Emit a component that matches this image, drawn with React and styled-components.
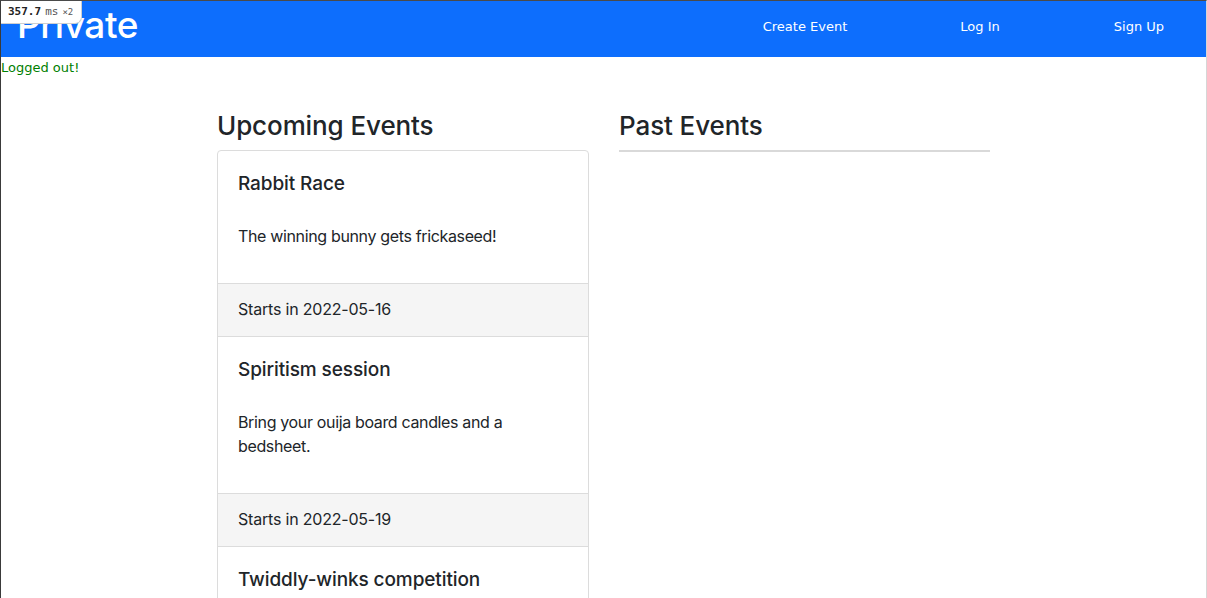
import React from "react";
import styled, { createGlobalStyle } from "styled-components";

const Global = createGlobalStyle`
  html, body { margin: 0; padding: 0; background: #fff; }
  body {
    font-family: Inter, "Noto Sans", "Liberation Sans", sans-serif;
    color: #212529;
    min-height: 598px;
    box-sizing: border-box;
    border-top: 1px solid #4a4a4a;
    border-left: 1px solid #3a3a3a;
    border-right: 1px solid #d6d6d6;
    overflow: hidden;
  }
  * { box-sizing: border-box; }
`;

const Page = styled.div`
  position: relative;
  min-height: 597px;
`;

const Badge = styled.div`
  position: absolute;
  top: 0;
  left: 0;
  background: #fff;
  padding: 4px 8px 5px 7px;
  border-bottom-right-radius: 7px;
  border: 1px solid #cfcfcf;
  border-top: none;
  border-left: none;
  font-family: "DejaVu Sans Mono", "Liberation Mono", monospace;
  display: flex;
  align-items: baseline;
  gap: 4px;
  z-index: 5;
`;

const BadgeNum = styled.span`
  font-size: 11px;
  font-weight: bold;
  color: #222;
`;

const BadgeUnit = styled.span`
  font-size: ${(p) => p.$size}px;
  color: #555;
`;

const Navbar = styled.nav`
  height: 56px;
  background: #0d6efd;
  display: flex;
  align-items: center;
  padding: 0 0 0 16px;
`;

const Brand = styled.div`
  color: #fff;
  font-size: 37px;
  font-weight: 500;
  letter-spacing: -0.4px;
  line-height: 1;
  margin-top: -9px;
`;

const NavLinks = styled.div`
  margin-left: auto;
  display: flex;
  align-items: center;
  height: 100%;
  margin-top: -6px;
`;

const NavLink = styled.a`
  color: #fff;
  text-decoration: none;
  font-family: "DejaVu Sans", Verdana, sans-serif;
  font-size: 13px;
  width: ${(p) => p.$w}px;
  text-align: center;
`;

const Flash = styled.div`
  color: #008000;
  font-family: "DejaVu Sans", Verdana, sans-serif;
  font-size: 13px;
  line-height: 20px;
  margin-top: 1px;
`;

const Container = styled.div`
  width: 773px;
  margin: 31px 0 0 216px;
  display: grid;
  grid-template-columns: 372px 371px;
  column-gap: 30px;
`;

const Column = styled.section``;

const Heading = styled.h3`
  font-size: 26px;
  font-weight: 500;
  letter-spacing: -0.1px;
  margin: 0 0 7px 0;
  line-height: 34px;
  color: #212529;
  padding-bottom: ${(p) => (p.$rule ? "7px" : "0")};
  border-bottom: ${(p) => (p.$rule ? "2px solid #d9d9d9" : "none")};
`;

const Card = styled.div`
  border: 1px solid #dcdcdc;
  border-radius: 4px;
  overflow: hidden;
`;

const CardBody = styled.div`
  padding: 21px 20px 20px 20px;
  border-top: ${(p) => (p.$first ? "none" : "1px solid #dcdcdc")};
`;

const CardTitle = styled.h5`
  font-size: 19px;
  font-weight: 500;
  line-height: 24px;
  letter-spacing: -0.1px;
  margin: 0 0 28px 0;
`;

const CardText = styled.p`
  font-size: 16px;
  line-height: 24px;
  letter-spacing: -0.35px;
  margin: 0 0 15px 0;
`;

const CardFooter = styled.div`
  background: #f5f5f5;
  border-top: 1px solid #dcdcdc;
  padding: 13px 20px 15px 20px;
  font-size: 16px;
  line-height: 24px;
  letter-spacing: -0.2px;
`;

const events = [
  { title: "Rabbit Race", text: "The winning bunny gets frickaseed!", date: "2022-05-16" },
  { title: "Spiritism session", text: "Bring your ouija board candles and a bedsheet.", date: "2022-05-19" },
  { title: "Twiddly-winks competition", text: "Bring your own winks.", date: "2022-05-22" },
];

export default function App() {
  return (
    <Page>
      <Global />
      <Badge>
        <BadgeNum>357.7</BadgeNum>
        <BadgeUnit $size={11}>ms</BadgeUnit>
        <BadgeUnit $size={9}>×2</BadgeUnit>
      </Badge>
      <Navbar>
        <Brand>Private</Brand>
        <NavLinks>
          <NavLink href="#" $w={166}>Create Event</NavLink>
          <NavLink href="#" $w={184}>Log In</NavLink>
          <NavLink href="#" $w={134}>Sign Up</NavLink>
        </NavLinks>
      </Navbar>
      <Flash>Logged out!</Flash>
      <Container>
        <Column>
          <Heading>Upcoming Events</Heading>
          <Card>
            {events.map((e, i) => (
              <React.Fragment key={e.title}>
                <CardBody $first={i === 0}>
                  <CardTitle>{e.title}</CardTitle>
                  <CardText>{e.text}</CardText>
                </CardBody>
                <CardFooter>Starts in {e.date}</CardFooter>
              </React.Fragment>
            ))}
          </Card>
        </Column>
        <Column>
          <Heading $rule>Past Events</Heading>
        </Column>
      </Container>
    </Page>
  );
}
